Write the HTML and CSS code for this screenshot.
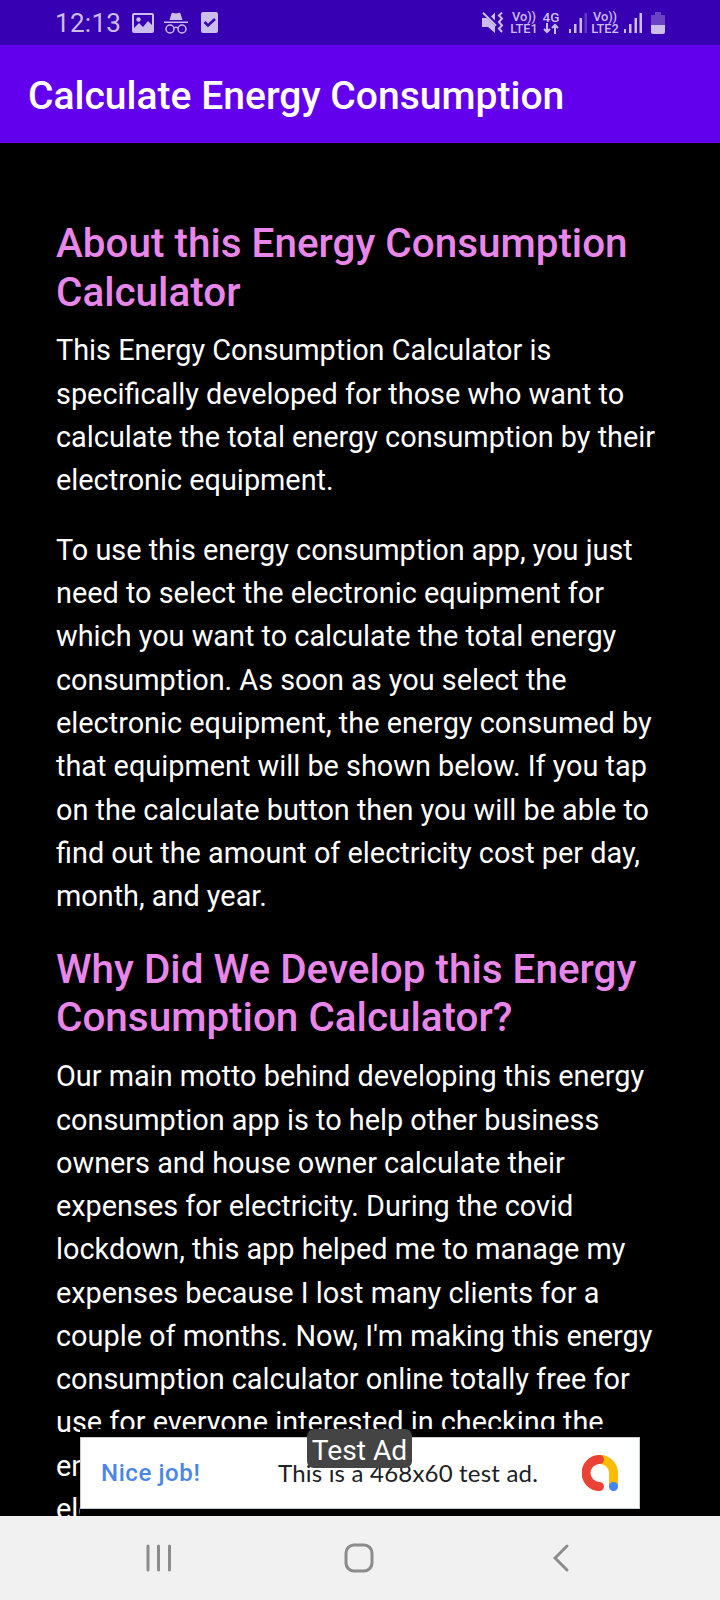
FILE: index.html
```
<!DOCTYPE html>
<html lang="en">
<head>
  <meta charset="UTF-8">
  <meta name="viewport" content="width=device-width, initial-scale=1.0">
  <title>Calculate Energy Consumption</title>
  <link rel="stylesheet" href="styles.css">
</head>

<body>
  <!-- Status bar -->
  <div class="status-bar">
    <div class="status-left">
      <span class="clock">12:13</span>
      <svg class="icon-picture" width="22" height="20" viewBox="0 0 22 20">
        <path fill-rule="evenodd" d="M2 0H20Q22 0 22 2V18Q22 20 20 20H2Q0 20 0 18V2Q0 0 2 0ZM2 2V15L7 10L11 14L16 8L20 12V2Z"/>
        <circle cx="6.500" cy="6.500" r="2.200"/>
      </svg>
      <svg class="icon-incognito" width="24" height="22" viewBox="0 0 24 22">
        <path d="M5.500 8L7.500 1.500Q8 .5 9 .8L12 1.500L15 .8Q16 .5 16.500 1.500L18.500 8Z"/>
        <path d="M0 9.500H24V11H0Z"/>
        <g class="line"><circle cx="6" cy="17" r="4"/><circle cx="18" cy="17" r="4"/><path d="M10 16Q12 14.500 14 16"/></g>
      </svg>
      <svg class="icon-check" width="17" height="21" viewBox="0 0 17 21">
        <rect width="17" height="21" rx="2"/>
        <path class="check" d="M3.500 10L7 13.500L14 7"/>
      </svg>
    </div>
    <div class="status-right">
      <svg class="icon-mute" width="22" height="21" viewBox="0 0 22 21">
        <path d="M0 6H5L13 14V21L6 15H0Z"/>
        <path d="M9 4.500L13 .5V8.500Z"/>
        <path class="line thick" d="M1 .8L14 13.800"/>
        <path class="line thick" d="M20 .5L17 3.500L20 6.500L17 10L20 13.500L17 16.500L20 20"/>
      </svg>
      <span class="volte volte-1"><span>Vo))</span><span>LTE1</span></span>
      <span class="data">
        <span>4G</span>
        <svg width="16" height="11" viewBox="0 0 16 11">
          <path class="line thick" d="M4 0V9M1 6L4 9L7 6M12 11V2M9 5L12 2L15 5"/>
        </svg>
      </span>
      <svg class="signal" width="18" height="20" viewBox="0 0 18 20">
        <path d="M0 16H2V20H0ZM5 11H7.500V20H5ZM10.500 5H13V20H10.500Z"/>
        <path opacity=".3" d="M15.500 0H18V20H15.500Z"/>
      </svg>
      <span class="volte volte-2"><span>Vo))</span><span>LTE2</span></span>
      <svg class="signal" width="18" height="20" viewBox="0 0 18 20">
        <path d="M0 16H2V20H0ZM5 11H7.500V20H5ZM10.500 5H13V20H10.500ZM15.500 0H18V20H15.500Z"/>
      </svg>
      <svg class="battery" width="14" height="22" viewBox="0 0 14 22">
        <path opacity=".35" d="M4 0H10V3H14V13H0V3H4Z"/>
        <path d="M0 13H14V20Q14 22 12 22H2Q0 22 0 20Z"/>
      </svg>
    </div>
  </div>

  <header class="app-bar">
    <h1>Calculate Energy Consumption</h1>
  </header>

  <main class="content">
    <h2>About this Energy Consumption<br>Calculator</h2>
    <p>This Energy Consumption Calculator is<br>
      specifically developed for those who want to<br>
      calculate the total energy consumption by their<br>
      electronic equipment.</p>
    <p>To use this energy consumption app, you just<br>
      need to select the electronic equipment for<br>
      which you want to calculate the total energy<br>
      consumption. As soon as you select the<br>
      electronic equipment, the energy consumed by<br>
      that equipment will be shown below. If you tap<br>
      on the calculate button then you will be able to<br>
      find out the amount of electricity cost per day,<br>
      month, and year.</p>
    <h2>Why Did We Develop this Energy<br>Consumption Calculator?</h2>
    <p>Our main motto behind developing this energy<br>
      consumption app is to help other business<br>
      owners and house owner calculate their<br>
      expenses for electricity. During the covid<br>
      lockdown, this app helped me to manage my<br>
      expenses because I lost many clients for a<br>
      couple of months. Now, I'm making this energy<br>
      consumption calculator online totally free for<br>
      use for everyone interested in checking the<br>
      en<br>
      ele</p>
  </main>

  <!-- Banner floats over the scrolled text -->
  <div class="ad-slot">
    <div class="ad">
      <span class="ad-title">Nice job!</span>
      <span class="ad-text">This is a 468x60 test ad.</span>
      <svg class="admob" width="36" height="36" viewBox="0 0 36 36">
        <path stroke="#fbbc04" d="M18 4.500A13.500 13.500 0 0 1 31.500 18V31"/>
        <path stroke="#ea4335" d="M17.500 4.500A13.500 13.500 0 0 0 17.500 31.500"/>
        <circle cx="31.500" cy="31.500" r="4.500" fill="#4285f4"/>
      </svg>
    </div>
    <span class="ad-badge">Test Ad</span>
  </div>

  <nav class="nav-bar">
    <svg width="26" height="28" viewBox="0 0 26 28"><path d="M2 2V26M12.500 2V26M23.500 2V26"/></svg>
    <svg class="home" width="30" height="30" viewBox="0 0 30 30"><rect x="2" y="2" width="26" height="26" rx="8"/></svg>
    <svg width="16" height="28" viewBox="0 0 16 28"><path d="M14 2L2 14L14 26"/></svg>
  </nav>
</body>
</html>
```
FILE: styles.css
```
:root {
  --primary: #6200ee;
  --primary-dark: #3700b3;
  --status: #cbbdec;
  --heading: #e986e9;
}

* {
  box-sizing: border-box;
}

body {
  position: relative;
  display: flex;
  flex-direction: column;
  height: 1600px;
  margin: 0;
  overflow: hidden;
  background: #000;
  color: #fff;
  font-family: Roboto, sans-serif;
}

svg {
  display: block;
  flex: none;
}

/* Status bar */
.status-bar {
  flex: none;
  display: flex;
  justify-content: space-between;
  height: 45px;
  padding: 0 55px;
  background: var(--primary-dark);
  color: var(--status);
}

.status-bar svg {
  fill: var(--status);
}

.status-bar .line {
  fill: none;
  stroke: var(--status);
  stroke-width: 1.5;
}

.status-bar .thick {
  stroke-width: 2;
}

.status-bar path.check {
  fill: none;
  stroke: var(--primary-dark);
  stroke-width: 2.5;
}

.status-left,
.status-right {
  display: flex;
  align-items: center;
}

.clock {
  width: 76.5px;
  font-size: 26px;
  letter-spacing: 0.3px;
}

.icon-incognito {
  margin-left: 10px;
}

.icon-check {
  margin-left: 13px;
}

.volte,
.data {
  display: flex;
  flex-direction: column;
  align-items: center;
  flex: none;
  width: 26px;
  font-size: 12.8px;
  font-weight: 500;
  line-height: 12px;
}

.volte-1 {
  margin-left: 7px;
}

.data {
  width: 16px;
  margin: 0 10px 0 6px;
  font-size: 13.5px;
}

.volte-2 {
  margin: 0 6px 0 5px;
}

.battery {
  margin-left: 9px;
}

/* App bar */
.app-bar {
  flex: none;
  display: flex;
  align-items: center;
  height: 98px;
  padding: 3px 0 0 28px;
  background: var(--primary);
}

.app-bar h1 {
  margin: 0;
  font-size: 39.05px;
  font-weight: 500;
  white-space: nowrap;
}

/* Article */
.content {
  flex: 1;
  min-height: 0;
  padding: 76px 0 0 56px;
  overflow: hidden;
  white-space: nowrap;
}

.content h2 {
  margin: 0 0 13.3px;
  color: var(--heading);
  font-size: 40.45px;
  font-weight: 500;
  line-height: 48.5px;
}

.content p {
  margin: 0 0 26.6px;
  font-size: 28.85px;
  line-height: 43.27px;
}

/* Ad banner */
.ad-slot {
  position: absolute;
  left: 80px;
  top: 1429px;
  width: 560px;
  height: 87px;
  padding-top: 8px;
  background: #000;
}

.ad {
  display: flex;
  align-items: center;
  height: 72px;
  padding: 0 21px 0 20px;
  border: 1px solid #c5ccd2;
  background: #fff;
  font-size: 24px;
  color: #202124;
}

.ad-title {
  width: 177px;
  color: #4a86e8;
  font-weight: 500;
  letter-spacing: 0.6px;
}

.ad-text {
  flex: 1;
  padding-bottom: 2px;
  font-family: Lato, sans-serif;
  letter-spacing: 0.2px;
  white-space: nowrap;
}

.admob path {
  fill: none;
  stroke-width: 9;
  stroke-linecap: round;
}

.ad-badge {
  position: absolute;
  left: 227px;
  top: 0;
  width: 105px;
  height: 39px;
  border-radius: 7px;
  background: #444;
  color: #fff;
  font-size: 28.2px;
  line-height: 43px;
  text-align: center;
}

/* System navigation */
.nav-bar {
  flex: none;
  display: flex;
  align-items: center;
  justify-content: space-between;
  height: 84px;
  padding: 0 151px 0 146px;
  background: #f1f1f1;
}

.nav-bar svg {
  fill: none;
  stroke: #8c8c8c;
  stroke-width: 3;
  stroke-linecap: round;
}

.nav-bar .home {
  margin-right: 7px;
}
```
